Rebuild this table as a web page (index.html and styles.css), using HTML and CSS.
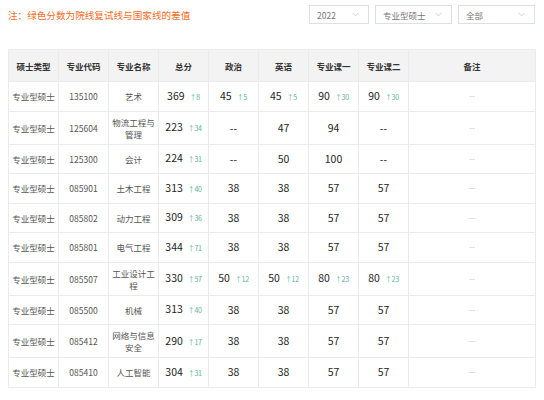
FILE: index.html
```html
<!DOCTYPE html>
<html lang="zh">
<head>
<meta charset="utf-8">
<link rel="stylesheet" href="styles.css">
</head>
<body>
<div class="bar">
  <div class="note">注：绿色分数为院线复试线与国家线的差值</div>
  <div class="filters">
    <div class="select s-year"><span>2022</span><svg class="chev" viewBox="0 0 8 5" width="7" height="5"><path d="M0.5 0.5 L4 4 L7.5 0.5" fill="none" stroke="#c0c4cc" stroke-width="0.9"/></svg></div>
    <div class="select s-wide"><span>专业型硕士</span><svg class="chev" viewBox="0 0 8 5" width="7" height="5"><path d="M0.5 0.5 L4 4 L7.5 0.5" fill="none" stroke="#c0c4cc" stroke-width="0.9"/></svg></div>
    <div class="select s-wide"><span>全部</span><svg class="chev" viewBox="0 0 8 5" width="7" height="5"><path d="M0.5 0.5 L4 4 L7.5 0.5" fill="none" stroke="#c0c4cc" stroke-width="0.9"/></svg></div>
  </div>
</div>
<table class="grid">
  <colgroup>
    <col class="c"><col class="c"><col class="c"><col class="c"><col class="c"><col class="c"><col class="c"><col class="c"><col class="cr">
  </colgroup>
  <thead>
    <tr><th>硕士类型</th><th>专业代码</th><th>专业名称</th><th>总分</th><th>政治</th><th>英语</th><th>专业课一</th><th>专业课二</th><th>备注</th></tr>
  </thead>
  <tbody>
    <tr><td>专业型硕士</td><td>135100</td><td>艺术</td><td class="sc">369<em>↑8</em></td><td class="sc">45<em>↑5</em></td><td class="sc">45<em>↑5</em></td><td class="sc">90<em>↑30</em></td><td class="sc">90<em>↑30</em></td><td class="rm">--</td></tr>
    <tr><td>专业型硕士</td><td>125604</td><td>物流工程与管理</td><td class="sc">223<em>↑34</em></td><td class="sc">--</td><td class="sc">47</td><td class="sc">94</td><td class="sc">--</td><td class="rm">--</td></tr>
    <tr><td>专业型硕士</td><td>125300</td><td>会计</td><td class="sc">224<em>↑31</em></td><td class="sc">--</td><td class="sc">50</td><td class="sc">100</td><td class="sc">--</td><td class="rm">--</td></tr>
    <tr><td>专业型硕士</td><td>085901</td><td>土木工程</td><td class="sc">313<em>↑40</em></td><td class="sc">38</td><td class="sc">38</td><td class="sc">57</td><td class="sc">57</td><td class="rm">--</td></tr>
    <tr><td>专业型硕士</td><td>085802</td><td>动力工程</td><td class="sc">309<em>↑36</em></td><td class="sc">38</td><td class="sc">38</td><td class="sc">57</td><td class="sc">57</td><td class="rm">--</td></tr>
    <tr><td>专业型硕士</td><td>085801</td><td>电气工程</td><td class="sc">344<em>↑71</em></td><td class="sc">38</td><td class="sc">38</td><td class="sc">57</td><td class="sc">57</td><td class="rm">--</td></tr>
    <tr><td>专业型硕士</td><td>085507</td><td>工业设计工程</td><td class="sc">330<em>↑57</em></td><td class="sc">50<em>↑12</em></td><td class="sc">50<em>↑12</em></td><td class="sc">80<em>↑23</em></td><td class="sc">80<em>↑23</em></td><td class="rm">--</td></tr>
    <tr><td>专业型硕士</td><td>085500</td><td>机械</td><td class="sc">313<em>↑40</em></td><td class="sc">38</td><td class="sc">38</td><td class="sc">57</td><td class="sc">57</td><td class="rm">--</td></tr>
    <tr><td>专业型硕士</td><td>085412</td><td>网络与信息安全</td><td class="sc">290<em>↑17</em></td><td class="sc">38</td><td class="sc">38</td><td class="sc">57</td><td class="sc">57</td><td class="rm">--</td></tr>
    <tr><td>专业型硕士</td><td>085410</td><td>人工智能</td><td class="sc">304<em>↑31</em></td><td class="sc">38</td><td class="sc">38</td><td class="sc">57</td><td class="sc">57</td><td class="rm">--</td></tr>
  </tbody>
</table>
</body>
</html>
```

FILE: styles.css
```css
html, body {
  margin: 0;
  background: #ffffff;
}
body {
  padding: 5px 9px 0 8px;
  font-family: "Noto Sans CJK SC", "Noto Sans", sans-serif;
  color: #555;
}
.bar {
  display: flex;
  align-items: center;
  justify-content: space-between;
  height: 19px;
}
.note {
  font-size: 9.6px;
  color: #f26b1d;
  line-height: 12px;
}
.filters {
  display: flex;
  gap: 6px;
}
.select {
  box-sizing: border-box;
  height: 19px;
  border: 1px solid #dcdfe6;
  display: flex;
  align-items: center;
  justify-content: space-between;
  padding: 0 9px 0 7px;
  font-size: 8.5px;
  color: #777;
}
.s-year { width: 60px; }
.s-wide { width: 77px; }
.chev { display: block; }
.grid {
  margin-top: 25px;
  width: 527px;
  table-layout: fixed;
  border-collapse: collapse;
}
.grid col.c { width: 50px; }
.grid col.cr { width: 127px; }
.grid th, .grid td {
  border: 1px solid #ebebeb;
  text-align: center;
  padding: 4px 3px;
  line-height: 12px;
}
.grid th {
  height: 23px;
  background: #f3f3f3;
  font-size: 8.5px;
  font-weight: bold;
  color: #333;
}
.grid td {
  height: 20.5px;
  font-size: 8.5px;
  color: #555;
}
.grid td.sc {
  font-size: 10.5px;
  font-weight: 400;
  color: #1e1e1e;
  white-space: nowrap;
}
.grid td.sc em {
  font-style: normal;
  font-size: 7px;
  font-weight: 400;
  color: #5bb59a;
  margin-left: 5px;
  letter-spacing: -0.3px;
}
.grid td.rm {
  color: #bdbdbd;
  font-size: 8px;
}
```
